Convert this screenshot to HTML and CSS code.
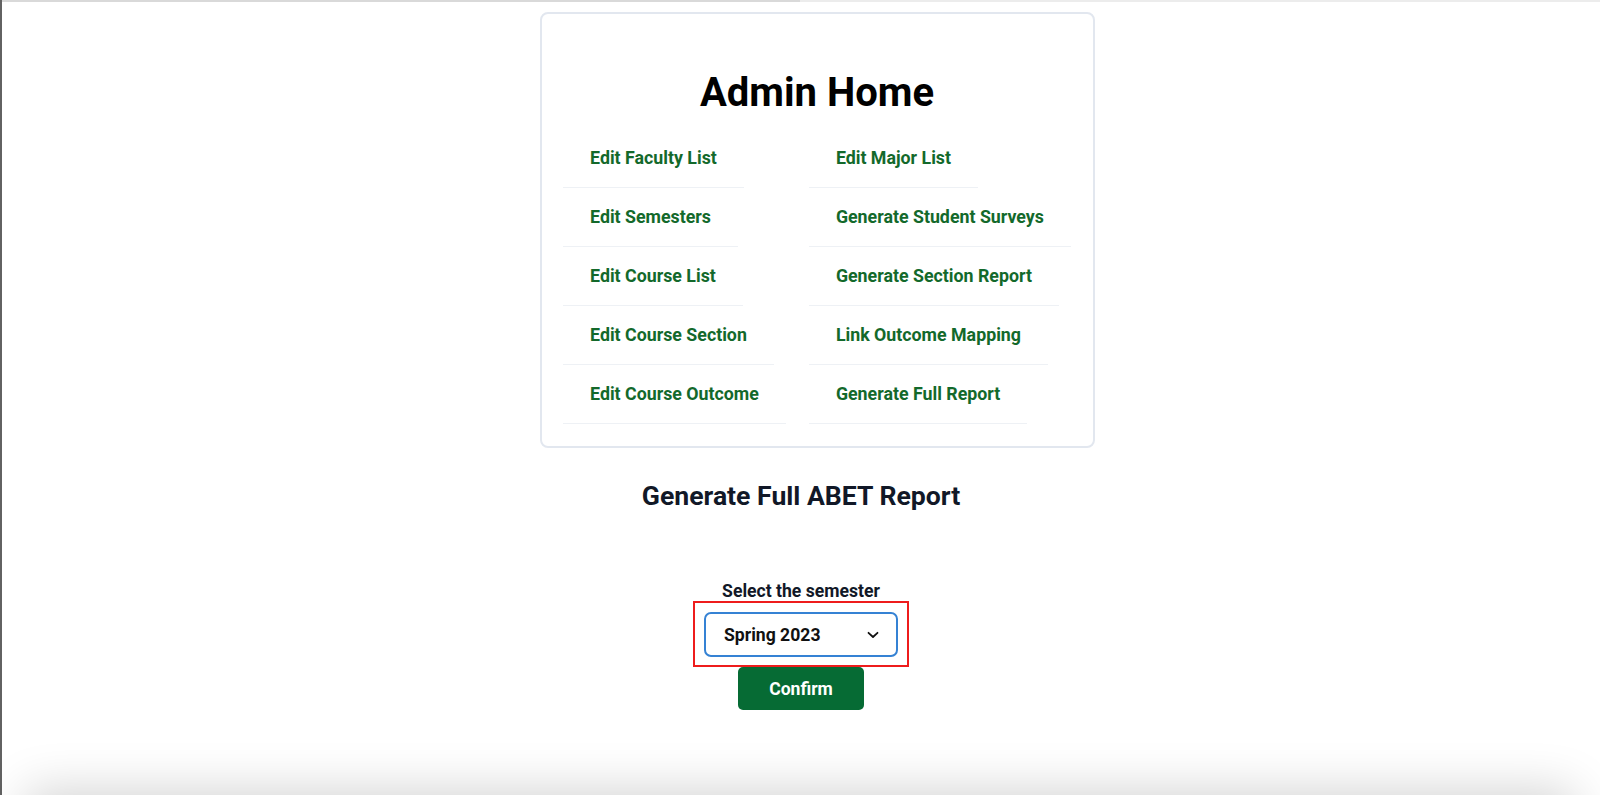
FILE: index.html
```html
<!DOCTYPE html>
<html lang="en">
<head>
<meta charset="utf-8">
<title>Admin Home</title>
<link rel="stylesheet" href="styles.css">
</head>
<body>
<div class="frame">
  <div class="topline"><span class="topline-left"></span><span class="topline-right"></span></div>
  <main class="page">
    <section class="card">
      <h1 class="card-title">Admin Home</h1>
      <nav class="link-grid">
        <a class="link" href="#">Edit Faculty List</a>
        <a class="link" href="#">Edit Major List</a>
        <a class="link" href="#">Edit Semesters</a>
        <a class="link" href="#">Generate Student Surveys</a>
        <a class="link" href="#">Edit Course List</a>
        <a class="link" href="#">Generate Section Report</a>
        <a class="link" href="#">Edit Course Section</a>
        <a class="link" href="#">Link Outcome Mapping</a>
        <a class="link" href="#">Edit Course Outcome</a>
        <a class="link" href="#">Generate Full Report</a>
      </nav>
    </section>
    <section class="report">
      <h2 class="report-title">Generate Full ABET Report</h2>
      <form class="report-form">
        <label class="field-label" for="semester">Select the semester</label>
        <div class="highlight">
          <div class="select">
            <span class="select-value">Spring 2023</span>
            <svg class="chevron" width="12" height="8" viewBox="0 0 12 8"><path d="M1.5 1.8 L6 6 L10.5 1.8" fill="none" stroke="#111" stroke-width="1.8" stroke-linecap="round" stroke-linejoin="round"/></svg>
          </div>
        </div>
        <button class="confirm" type="button">Confirm</button>
      </form>
    </section>
  </main>
  <div class="bottom-shadow"></div>
</div>
</body>
</html>
```
FILE: styles.css
```css
* { box-sizing: border-box; }
html, body { margin: 0; padding: 0; background: #ffffff; }
body {
  font-family: Roboto, "Liberation Sans", Arial, sans-serif;
  color: #111827;
  overflow: hidden;
}
.frame {
  min-height: 795px;
  border-left: 2px solid #626262;
  position: relative;
}
.topline {
  display: flex;
  height: 2px;
}
.topline-left { width: 798px; background: #d9d9d9; }
.topline-right { flex: 1; background: #ececec; }

.page {
  display: flex;
  flex-direction: column;
  align-items: center;
}
.card {
  margin: 10px 0 0 33px;
  width: fit-content;
  border: 2px solid #e2e7ef;
  border-radius: 8px;
  padding: 0 22px 22px 21px;
}
.card-title {
  margin: 55px 0 12px;
  font-size: 40px;
  line-height: 48px;
  font-weight: 700;
  color: #000;
  text-align: center;
}
.link-grid {
  display: grid;
  grid-template-columns: auto auto;
  column-gap: 23px;
  justify-items: start;
}
.link {
  display: block;
  padding: 17px 27px;
  line-height: 24px;
  font-size: 17.8px;
  font-weight: 700;
  color: #13692b;
  text-decoration: none;
  border-bottom: 1px solid #eef1f5;
}

.report {
  display: flex;
  flex-direction: column;
  align-items: center;
}
.report-title {
  margin: 30px 0 0;
  font-size: 26.6px;
  line-height: 36px;
  font-weight: 700;
  color: #111827;
}
.report-form {
  margin-top: 67px;
  display: flex;
  flex-direction: column;
  align-items: center;
}
.field-label {
  font-size: 17.6px;
  font-weight: 700;
  line-height: 20px;
  color: #111827;
}
.highlight {
  margin-top: 0;
  border: 2px solid #ee1c1c;
  padding: 9px 9px 8px;
}
.select {
  width: 194px;
  height: 45px;
  border: 2px solid #3582d4;
  border-radius: 7px;
  display: flex;
  align-items: center;
  justify-content: space-between;
  padding: 0 17px 0 18px;
}
.select-value {
  font-size: 17.6px;
  font-weight: 700;
  color: #111;
}
.chevron { display: block; }
.confirm {
  width: 126px;
  height: 43px;
  border: none;
  border-radius: 5px;
  background: #066b34;
  color: #fff;
  font-family: inherit;
  font-size: 17.6px;
  font-weight: 700;
}
.bottom-shadow {
  position: fixed;
  left: 40px;
  right: 40px;
  top: 805px;
  height: 40px;
  box-shadow: 0 0 50px 14px rgba(0, 0, 0, 0.18);
}
```
